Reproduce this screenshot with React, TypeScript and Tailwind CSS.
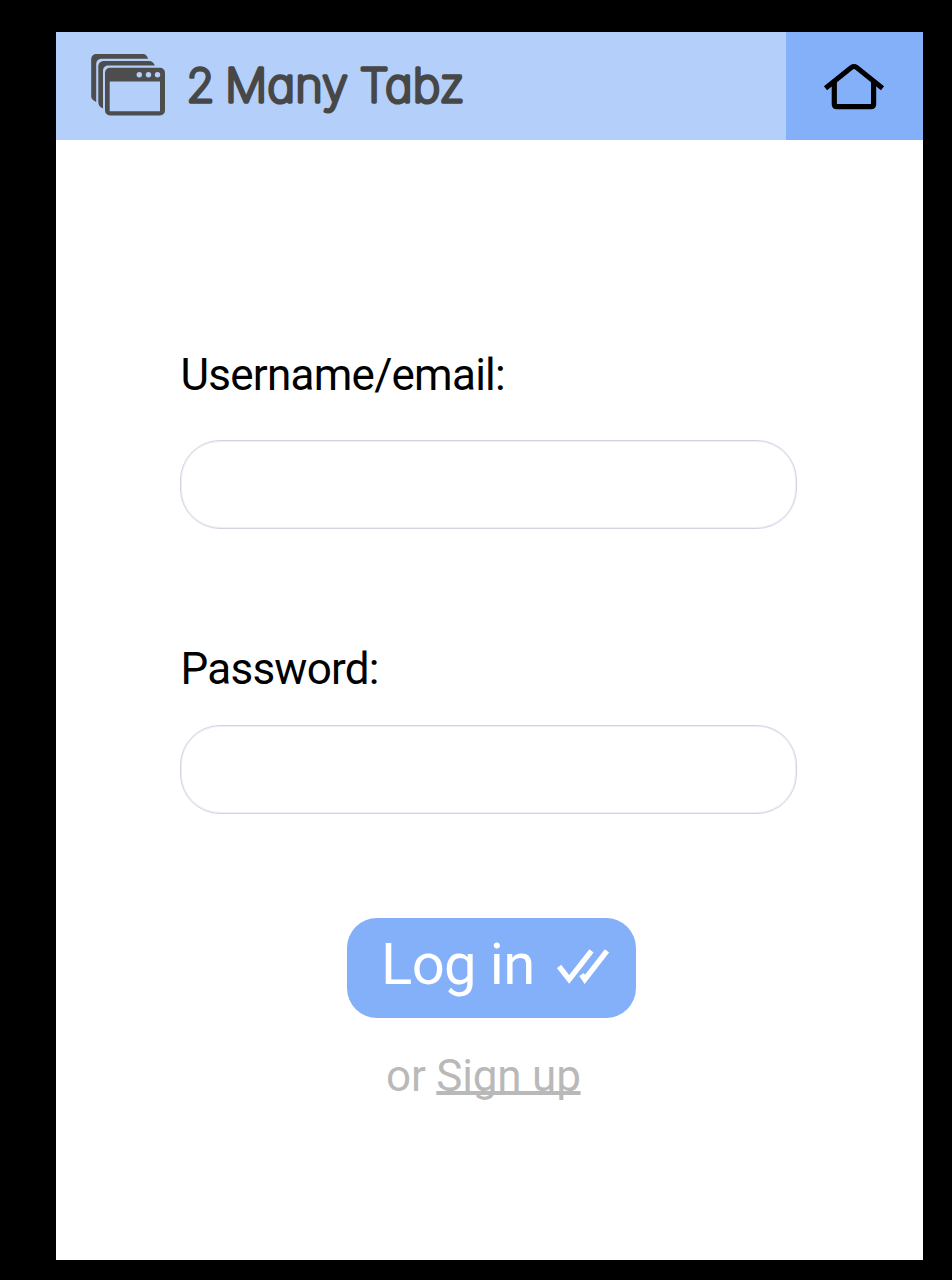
import React from "react";

function TabsLogo() {
  return (
    <svg className="ml-[34px] h-[64px] w-[76px] shrink-0 -translate-y-px" viewBox="90 53 76 64" fill="none" aria-hidden="true">
      <path d="M91.200 59a5 5 0 0 1 5-5H143c2.500 0 4 1.800 5.200 4.700H101a5 5 0 0 0-4.800 5V102C93 100.500 91.200 98.800 91.200 96.500Z" fill="#4d4d4d" />
      <path d="M98.300 66.200a5.200 5.200 0 0 1 5.200-5.200H149c3 0 4.800 1.800 5.900 4.600H108a5 5 0 0 0-5 5V108.600C99.500 107 98.300 105 98.300 102Z" fill="#4d4d4d" />
      <path fillRule="evenodd" d="M110 67.700H160a5 5 0 0 1 5 5V110.500a5 5 0 0 1-5 5H110a5 5 0 0 1-5-5V72.700a5 5 0 0 1 5-5ZM109.700 81.500V111.200H160V81.500Z" fill="#4d4d4d" />
      <g fill="#b4cff9">
        <circle cx="139.300" cy="74.700" r="2.700" />
        <circle cx="148.500" cy="74.700" r="2.700" />
        <circle cx="157.500" cy="74.700" r="2.700" />
      </g>
    </svg>
  );
}

function Wordmark() {
  return (
    <svg className="h-[108px] w-[300px] shrink-0" viewBox="180 32 300 108" role="img" aria-label="2 Many Tabz">
      <g
        fill="#474747"
        stroke="#474747"
        strokeWidth="3.3"
        strokeLinejoin="round"
        fontFamily="Inter, sans-serif"
        fontSize="46.5"
        fontWeight="200"
        style={{ fontFeatureSettings: '"cv11" 1' }}
      >
        <text x="186.500" y="102" textLength="28" lengthAdjust="spacingAndGlyphs">2</text>
        <text x="225" y="102" textLength="123" lengthAdjust="spacingAndGlyphs">Many</text>
        <text x="359.500" y="102" textLength="105" lengthAdjust="spacingAndGlyphs">Tabz</text>
      </g>
    </svg>
  );
}

function HomeIcon() {
  return (
    <svg className="h-[48px] w-[62px] translate-y-px" viewBox="823 63 62 48" fill="none" stroke="#000" aria-hidden="true">
      <path d="M825.500 88.200 851.300 67.500Q854 65.600 856.700 67.500L882.500 88.200" strokeWidth="5" />
      <path d="M834.300 82V104.200Q834.300 106.700 836.800 106.700H871Q873.600 106.700 873.600 104.200V82" strokeWidth="5.2" />
    </svg>
  );
}

function DoubleCheck() {
  return (
    <svg className="ml-[22px] h-[36px] w-[53px] -translate-y-[2px]" viewBox="557 948 53 36" fill="none" stroke="#fff" strokeWidth="5.4" aria-hidden="true">
      <path d="M559 966.500 569.200 979.400 591.500 950.800" />
      <path d="M581.500 974.400 584.800 979.400 607 950.800" />
    </svg>
  );
}

const inputStyle =
  "block h-[89px] w-[617px] rounded-[40px] border border-[#d5d1e2] bg-white px-8 text-[36px] shadow-[inset_0_0_0_1px_#efedf5] outline-none";

export default function App() {
  return (
    <div className="h-[1280px] w-[952px] bg-black pl-[55.500px] pt-[32px] font-['Roboto',sans-serif]">
      <main className="flex h-[1228px] w-[867px] flex-col bg-white">
        <header className="flex h-[108px] shrink-0 items-center bg-[#b4cff9]">
          <TabsLogo />
          <div className="ml-[14px]">
            <Wordmark />
          </div>
          <button aria-label="Home" className="ml-auto flex h-full w-[137px] items-center justify-center bg-[#84aff9]">
            <HomeIcon />
          </button>
        </header>
        <form className="flex flex-col pl-[124.500px] pt-[209px]" onSubmit={(e) => e.preventDefault()}>
          <label htmlFor="username" className="h-[52px] pl-[0.500px] text-[44px] leading-[52px] tracking-[-0.750px] text-black">
            Username/email:
          </label>
          <input id="username" className={inputStyle + " mt-[39px]"} />
          <label htmlFor="password" className="mt-[114px] h-[52px] pl-[0.500px] text-[44px] leading-[52px] tracking-[-0.750px] text-black">
            Password:
          </label>
          <input id="password" type="password" className={inputStyle + " mt-[30px]"} />
          <button className="ml-[167px] mt-[104px] flex h-[100px] w-[289px] items-center rounded-[30px] bg-[#84aff9] pl-[34px] text-white">
            <span className="-mt-[8px] text-[58px] leading-[68px] tracking-[-0.600px]">Log in</span>
            <DoubleCheck />
          </button>
        </form>
        <p className="ml-[330.500px] mt-[32px] whitespace-nowrap text-[44px] leading-[52px] tracking-[-0.200px] text-[#b9b9b9]">
          or{" "}
          <a className="underline decoration-[4px] underline-offset-[0px] [text-decoration-skip-ink:none]">Sign up</a>
        </p>
      </main>
    </div>
  );
}
